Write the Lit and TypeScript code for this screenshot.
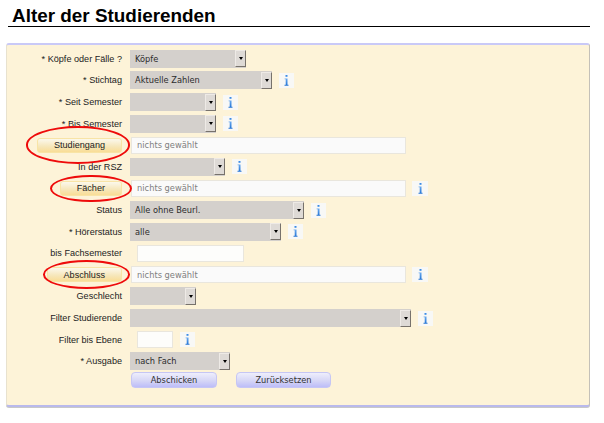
import { LitElement, html, css, svg } from "lit";
import { customElement } from "lit/decorators.js";

type Row = {
  kind: "select" | "picker" | "input";
  label: string;
  value?: string;
  w?: number;
  info?: boolean;
  ring?: { w: number; r: number; t: number; b: number };
};

const rows: Row[] = [
  { kind: "select", label: "* Köpfe oder Fälle ?", value: "Köpfe", w: 116 },
  { kind: "select", label: "* Stichtag", value: "Aktuelle Zahlen", w: 142, info: true },
  { kind: "select", label: "* Seit Semester", w: 86, info: true },
  { kind: "select", label: "* Bis Semester", w: 86, info: true },
  { kind: "picker", label: "Studiengang", ring: { w: 104, r: 8, t: 8, b: 8 } },
  { kind: "select", label: "In der RSZ", w: 95, info: true },
  { kind: "picker", label: "Fächer", info: true, ring: { w: 82, r: 10, t: 3, b: 3 } },
  { kind: "select", label: "Status", value: "Alle ohne Beurl.", w: 174, info: true },
  { kind: "select", label: "* Hörerstatus", value: "alle", w: 151, info: true },
  { kind: "input", label: "bis Fachsemester", w: 107 },
  { kind: "picker", label: "Abschluss", info: true, ring: { w: 87, r: 8, t: 4, b: 3 } },
  { kind: "select", label: "Geschlecht", w: 66 },
  { kind: "select", label: "Filter Studierende", w: 281, info: true },
  { kind: "input", label: "Filter bis Ebene", w: 36, info: true },
  { kind: "select", label: "* Ausgabe", value: "nach Fach", w: 100 },
];

@customElement("app-root")
export class AppRoot extends LitElement {
  static styles = css`
    :host {
      display: block;
      width: 604px;
      height: 423px;
      background: #fff;
      font-family: "Liberation Sans", Arial, sans-serif;
      overflow: hidden;
    }
    h1 {
      margin: 0 14px 0 8px;
      padding: 6px 0 0 4px;
      height: 20px;
      border-bottom: 1.5px solid #000;
      font-size: 18.9px;
      line-height: 20px;
      font-weight: bold;
      color: #000;
    }
    .panel {
      margin: 15.5px 14px 0 6px;
      height: 364px;
      box-sizing: border-box;
      background: #fdf3d8;
      border-top: 2px solid #c9c9f7;
      border-bottom: 2px solid #b9b9ec;
      border-right: 1px solid #c4c0b8;
      border-left: 1px solid #e8e2cf;
      border-radius: 3px;
      box-shadow: 0 1px 0 #c8c8c8;
      padding-top: 3.6px;
      display: flex;
      flex-direction: column;
    }
    .row {
      display: flex;
      align-items: center;
      height: 21.6px;
      flex: none;
    }
    .label {
      flex: none;
      width: 115px;
      text-align: right;
      font-size: 9.1px;
      color: #222;
      white-space: nowrap;
      position: relative;
      display: flex;
      justify-content: flex-end;
      align-items: center;
      height: 100%;
    }
    .field {
      margin-left: 8px;
      display: flex;
      align-items: center;
      min-width: 0;
    }
    .select {
      height: 18px;
      box-sizing: border-box;
      background: #d4d0cc;
      display: flex;
      align-items: center;
      justify-content: space-between;
      font-family: "DejaVu Sans", sans-serif;
      font-size: 8.25px;
      color: #2c2c2c;
      padding-left: 5px;
    }
    .arrow {
      flex: none;
      width: 11px;
      height: 17px;
      box-sizing: border-box;
      background: #dedad6;
      border: 1px solid;
      border-color: #eeeae6 #77726c #77726c #eeeae6;
      display: flex;
      align-items: center;
      justify-content: center;
    }
    .arrow i {
      display: block;
      width: 0;
      height: 0;
      border: 2.5px solid transparent;
      border-top: 3px solid #000;
      border-bottom: 0;
    }
    .text {
      height: 17px;
      box-sizing: border-box;
      background: #fafafa;
      border: 1px solid #e9e6dd;
      font-family: "DejaVu Sans", sans-serif;
      font-size: 8.3px;
      color: #808080;
      padding-left: 5px;
      display: flex;
      align-items: center;
    }
    .text.picker {
      width: 275px;
      margin-left: 1px;
    }
    .text.plain {
      margin-left: 7px;
      background: #fdfdfb;
    }
    .info {
      flex: none;
      width: 15px;
      height: 15px;
      margin-left: 7px;
      background: #f8f8f6;
      display: flex;
      align-items: center;
      justify-content: center;
    }
    .text.picker + .info {
      margin-left: 6px;
      width: 16px;
    }
    .pick {
      height: 15px;
      box-sizing: border-box;
      padding: 0 16px;
      border: 1px solid #f8e4a6;
      border-radius: 3px;
      background: linear-gradient(#fbf8ec, #f6e6b8 60%, #f9dd96);
      font: 9.1px "Liberation Sans", Arial, sans-serif;
      color: #222;
    }
    .ring {
      position: absolute;
      box-sizing: border-box;
      border: 2.4px solid #ee0b0b;
      border-radius: 50%;
      pointer-events: none;
    }
    .actions {
      display: flex;
      gap: 19px;
      margin-left: 124px;
    }
    .submit {
      height: 16px;
      box-sizing: border-box;
      border: 1px solid #c6c6f4;
      border-radius: 4px;
      background: linear-gradient(#eeeefc, #d6d6f6 55%, #bdbdf8);
      font: 8.25px "DejaVu Sans", sans-serif;
      color: #333;
      padding: 0;
    }
    .send { width: 86px; }
    .reset { width: 95px; }
  `;

  private info() {
    return html`<span class="info">${svg`<svg width="7" height="11" viewBox="0 0 7 11">
      <defs><linearGradient id="ig" x1="0" y1="0" x2="0" y2="1">
        <stop offset="0" stop-color="#6aaaf0"/><stop offset="1" stop-color="#2273d4"/></linearGradient></defs>
      <rect x="2.5" y="0" width="2" height="1.8" fill="#3c8ce6"/>
      <path d="M1.6 3.4h2.9v6.3h1v1H1.5v-1h1.2V4.3H1.6z" fill="url(#ig)"/>
    </svg>`}</span>`;
  }

  private renderRow(r: Row) {
    if (r.kind === "picker") {
      return html`<div class="row">
        <div class="label">
          <button class="pick">${r.label}</button>
          ${r.ring
            ? html`<span
                class="ring"
                style="right:${-r.ring.r}px;top:${-r.ring.t}px;bottom:${-r.ring.b}px;width:${r.ring.w}px"
              ></span>`
            : ""}
        </div>
        <div class="field">
          <div class="text picker">nichts gewählt</div>
          ${r.info ? this.info() : ""}
        </div>
      </div>`;
    }
    if (r.kind === "input") {
      return html`<div class="row">
        <div class="label">${r.label}</div>
        <div class="field">
          <div class="text plain" style="width:${r.w}px"></div>
          ${r.info ? this.info() : ""}
        </div>
      </div>`;
    }
    return html`<div class="row">
      <div class="label">${r.label}</div>
      <div class="field">
        <div class="select" style="width:${r.w}px">
          <span>${r.value ?? ""}</span>
          <span class="arrow"><i></i></span>
        </div>
        ${r.info ? this.info() : ""}
      </div>
    </div>`;
  }

  render() {
    return html`
      <h1>Alter der Studierenden</h1>
      <div class="panel">
        ${rows.map((r) => this.renderRow(r))}
        <div class="actions">
          <button class="submit send">Abschicken</button>
          <button class="submit reset">Zurücksetzen</button>
        </div>
      </div>
    `;
  }
}
